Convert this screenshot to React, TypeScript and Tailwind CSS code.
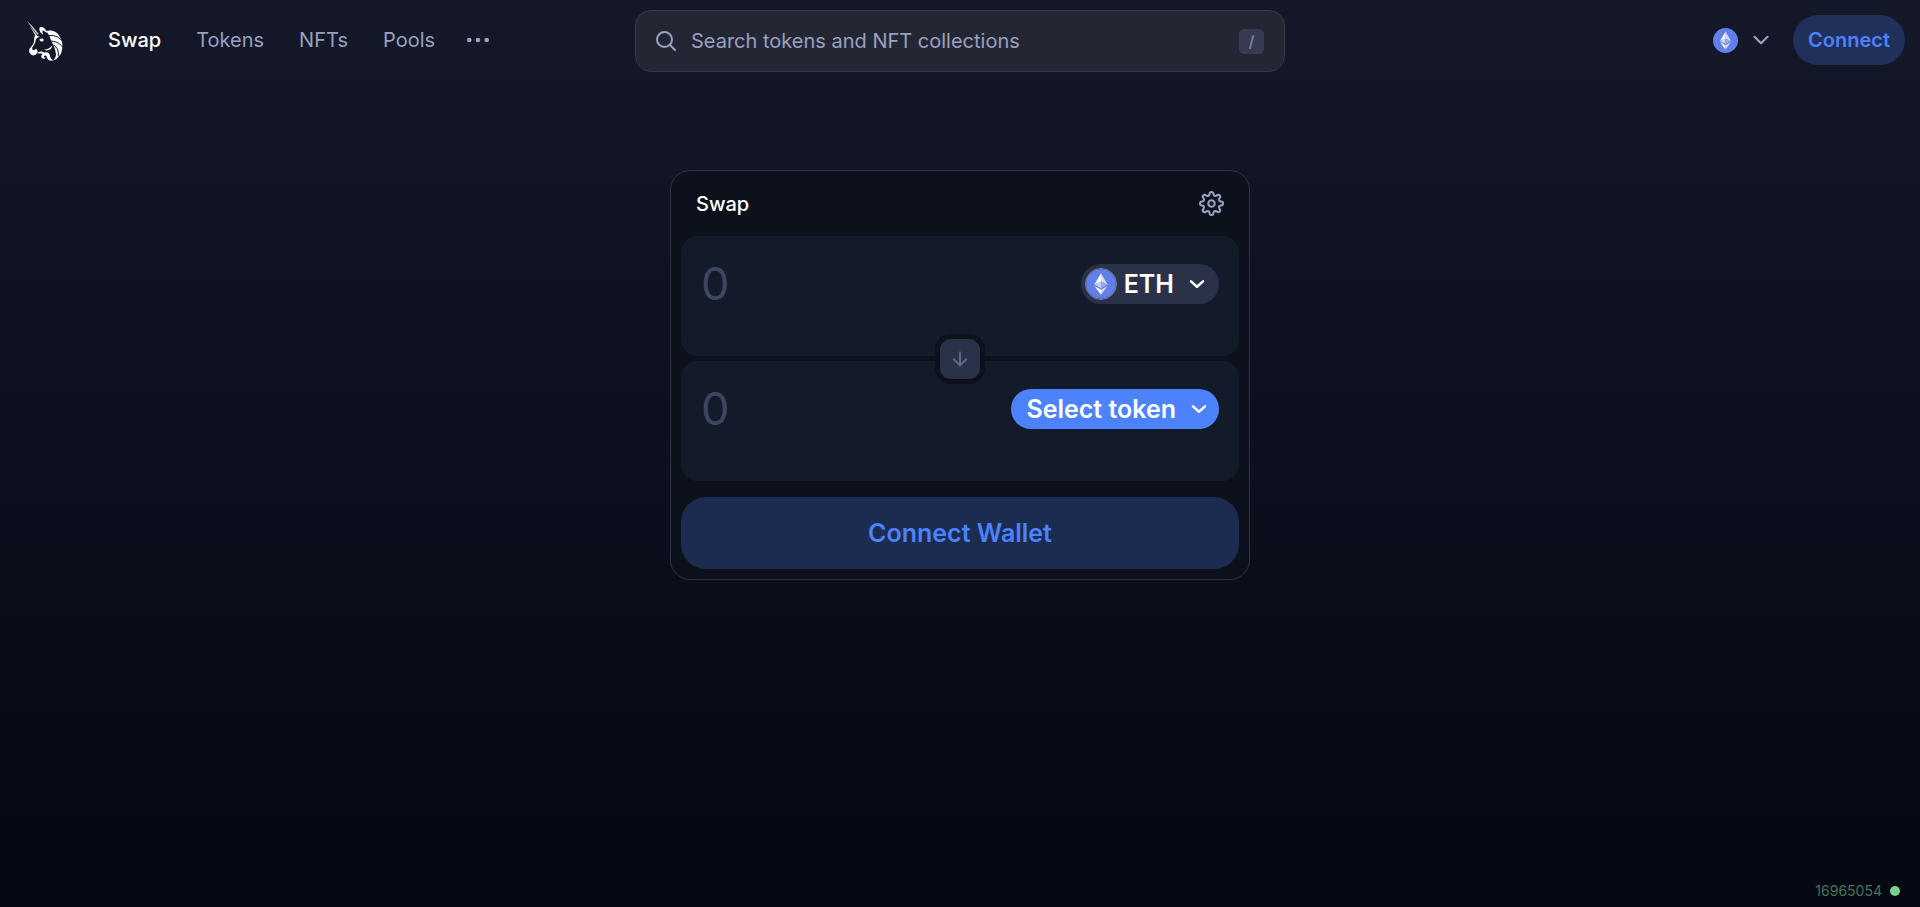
import type { ReactNode } from "react";

const links = ["Swap", "Tokens", "NFTs", "Pools"];

function UnicornLogo() {
  return (
    <svg viewBox="18 18 114 126" className="w-[38px] h-[42px]" fill="#fff" aria-hidden="true">
      {/* horn, two thin blades */}
      <path d="M21 24 L36 38 L56 62 L52 65 L38 47 Z" opacity="0.75" />
      <path d="M29 38 L52 68 L47 69 Z" opacity="0.9" />
      {/* ears */}
      <path d="M58 46 C60 41 67 40 72 45 C76 49 80 54 83 61 C78 58 73 55 68 52 C67 56 68 61 70 65 C62 61 57 54 58 46 Z" />
      {/* brow, nose and muzzle */}
      <path d="M45 67 C50 69 55 70 60 71 C53 72 48 76 47 82 C46 90 42 97 37 103 C36 107 37 111 39 111 C42 112 45 110 48 107 C52 111 54 115 52 119 C49 124 43 128 37 127 C29 124 26 116 28 108 C33 102 39 95 42 87 C43 80 42 73 45 67 Z" />
      {/* eye */}
      <path d="M59 79 C62 75 70 76 71 80 C71 85 66 87 63 85 C60 84 58 82 59 79 Z" />
      {/* mane */}
      <path d="M78 54 C95 49 112 55 119 71 C125 80 128 91 127 100 C127 112 124 124 117 130 C112 137 107 141 100 142 C106 135 110 127 107 119 C106 110 103 102 98 92 C92 82 89 65 78 54 Z" />
      <g fill="none" stroke="#141827" strokeWidth="3" strokeLinecap="round">
        <path d="M86 68 C100 65 115 70 124 82" />
        <path d="M90 84 C104 84 118 89 127 101" />
        <path d="M97 95 C109 99 117 110 115 129" />
      </g>
      {/* cheek line */}
      <path d="M72 110 C84 109 92 105 97 97 C97 106 90 111 84 112 C80 113 76 112 72 110 Z" />
      {/* beard curl */}
      <path d="M51 121 C57 115 67 114 73 119 C82 116 90 121 90 129 C91 136 95 140 101 142 C91 145 83 141 81 134 C80 127 74 125 72 130 C71 133 74 135 77 133 C75 140 66 138 64 132 C63 128 65 125 68 123 C62 120 57 122 51 121 Z" />
    </svg>
  );
}

function EthIcon({ className }: { className: string }) {
  return (
    <svg viewBox="0 0 32 32" className={className} aria-hidden="true">
      <circle cx="16" cy="16" r="16" fill="#627eea" />
      <path d="M16 4.5 L9 16.5 L16 13.4 Z" fill="#fff" />
      <path d="M16 4.5 V13.4 L23 16.5 Z" fill="#d6dcf8" />
      <path d="M9 16.5 L16 13.4 V20.6 Z" fill="#c6cff5" />
      <path d="M16 13.4 L23 16.5 L16 20.6 Z" fill="#98a9ef" />
      <path d="M9 18 L16 22 V27.5 Z" fill="#fff" />
      <path d="M16 22 L23 18 L16 27.5 Z" fill="#d6dcf8" />
    </svg>
  );
}

function Chevron() {
  return (
    <svg
      viewBox="0 0 16 10"
      className="h-[10px] w-4"
      fill="none"
      stroke="currentColor"
      strokeWidth="2.2"
      strokeLinecap="round"
      strokeLinejoin="round"
      aria-hidden="true"
    >
      <path d="M1.5 1.8 L8 8.2 L14.5 1.8" />
    </svg>
  );
}

function PillChevron() {
  return (
    <svg
      viewBox="0 0 16 10"
      className="h-[10px] w-4"
      fill="none"
      stroke="currentColor"
      strokeWidth="2.5"
      strokeLinecap="round"
      strokeLinejoin="round"
      aria-hidden="true"
    >
      <path d="M2 2.4 L8 7.8 L14 2.4" />
    </svg>
  );
}

// eight rounded teeth around the centre
const gearPath =
  Array.from({ length: 160 }, (_, i) => {
    const a = (i / 160) * Math.PI * 2;
    const r = 9.5 + 1.6 * Math.tanh(1.8 * Math.cos(8 * a));
    const x = (12 + r * Math.cos(a)).toFixed(2);
    const y = (12 + r * Math.sin(a)).toFixed(2);
    return `${i === 0 ? "M" : "L"}${x} ${y}`;
  }).join(" ") + " Z";

function Gear() {
  return (
    <svg
      viewBox="0 0 24 24"
      className="size-[25px]"
      fill="none"
      stroke="currentColor"
      strokeWidth="2"
      strokeLinejoin="round"
      aria-hidden="true"
    >
      <circle cx="12" cy="12" r="3.1" />
      <path d={gearPath} />
    </svg>
  );
}

function Header() {
  return (
    <header className="grid grid-cols-[1fr_650px_1fr] items-start">
      <nav className="flex h-20 items-center pl-[26px]">
        <a href="#" aria-label="Home">
          <UnicornLogo />
        </a>
        <div className="ml-11 flex items-center gap-[35px] text-[20px] leading-6">
          {links.map((l, i) => (
            <a key={l} href="#" className={i === 0 ? "font-medium text-white" : "text-[#98a1c0]"}>
              {l}
            </a>
          ))}
        </div>
        <button aria-label="More" className="ml-8 text-[#98a1c0]">
          <svg viewBox="0 0 22 6" className="w-[22px] h-[6px]" fill="currentColor" aria-hidden="true">
            <circle cx="2.3" cy="3" r="2.3" />
            <circle cx="11" cy="3" r="2.3" />
            <circle cx="19.7" cy="3" r="2.3" />
          </svg>
        </button>
      </nav>

      <label className="mt-[10px] flex h-[62px] items-center rounded-2xl border border-[#363948] bg-[#242634] px-5">
        <svg
          viewBox="0 0 20 20"
          className="size-5 text-[#98a1c0]"
          fill="none"
          stroke="currentColor"
          strokeWidth="2"
          strokeLinecap="round"
          aria-hidden="true"
        >
          <circle cx="8.5" cy="8.5" r="7.5" />
          <path d="M14 14 L19 19" />
        </svg>
        <input
          type="text"
          aria-label="Search tokens and NFT collections"
          placeholder="Search tokens and NFT collections"
          className="ml-[15px] min-w-0 flex-1 bg-transparent text-[20px] leading-6 outline-none placeholder:text-[#98a1c0]"
        />
        <kbd className="flex size-[25px] items-center justify-center rounded-[5px] bg-[#373b51] font-['Inter',sans-serif] text-[16px] font-semibold text-[#777f9b]">
          /
        </kbd>
      </label>

      <div className="flex h-20 items-center justify-end pr-[15px]">
        <button aria-label="Network" className="flex items-center gap-[15px] text-[#98a1c0]">
          <EthIcon className="size-[25px]" />
          <Chevron />
        </button>
        <button className="ml-6 h-[50px] w-28 rounded-full bg-[#21305a] text-[20px] font-semibold text-[#4c82fb]">
          Connect
        </button>
      </div>
    </header>
  );
}

function TokenPanel({ label, children }: { label: string; children: ReactNode }) {
  return (
    <div className="flex h-[120px] items-start justify-between rounded-2xl bg-[#131a2a] px-5 pt-7">
      <input
        type="text"
        aria-label={label}
        placeholder="0"
        className="h-[38px] w-0 flex-1 bg-transparent text-[45px] leading-[38px] text-white outline-none placeholder:text-[#3d4661]"
      />
      {children}
    </div>
  );
}

function SwapCard() {
  return (
    <main className="mx-auto mt-[90px] w-[580px] rounded-[20px] border border-[#2f3243] bg-[#0d111c] px-[10px] pb-[10px]">
      <div className="flex h-[65px] items-center justify-between px-[15px]">
        <h1 className="text-[20px] leading-6 font-medium text-white">Swap</h1>
        <button aria-label="Settings" className="text-[#98a1c0]">
          <Gear />
        </button>
      </div>

      <div className="relative flex flex-col gap-[5px]">
        <TokenPanel label="You pay">
          <button className="flex h-10 items-center rounded-full bg-[#293249] pr-[14px] pl-1 text-[25px] font-semibold text-white">
            <EthIcon className="size-8 rounded-full border border-[#7780a0]" />
            <span className="mr-[15px] ml-[7px] pt-0.5">ETH</span>
            <PillChevron />
          </button>
        </TokenPanel>
        <TokenPanel label="You receive">
          <button className="flex h-10 items-center rounded-full bg-[#4c82fb] pr-3 pl-[15px] text-[25px] font-semibold text-white">
            <span className="mr-[15px] pt-0.5">Select token</span>
            <PillChevron />
          </button>
        </TokenPanel>
        {/* switch direction, sits over the seam of both panels */}
        <button
          aria-label="Switch tokens"
          className="absolute top-1/2 left-1/2 flex size-[50px] -translate-1/2 items-center justify-center rounded-2xl border-[5px] border-[#0d111c] bg-[#293249] text-[#5d6785]"
        >
          <svg
            viewBox="0 0 16 16"
            className="size-4"
            fill="none"
            stroke="currentColor"
            strokeWidth="2"
            strokeLinecap="round"
            strokeLinejoin="round"
            aria-hidden="true"
          >
            <path d="M8 1.5 V14.5 M1.8 8.3 L8 14.5 L14.2 8.3" />
          </svg>
        </button>
      </div>

      <button className="mt-4 h-[72px] w-full rounded-[25px] bg-[#1c2b50] pt-0.5 text-[25px] font-semibold text-[#4c82fb]">
        Connect Wallet
      </button>
    </main>
  );
}

export default function App() {
  return (
    <div className="flex min-h-screen flex-col bg-linear-to-b/srgb from-[#141828] to-[#050713] font-['Inter',sans-serif]">
      <Header />
      <SwapCard />
      <footer className="mt-auto flex items-center justify-end gap-2 pr-5 pb-2 text-[14px] leading-4 text-[#47755a]">
        <span>16965054</span>
        <span className="size-[10px] rounded-full bg-[#76d191]" />
      </footer>
    </div>
  );
}
